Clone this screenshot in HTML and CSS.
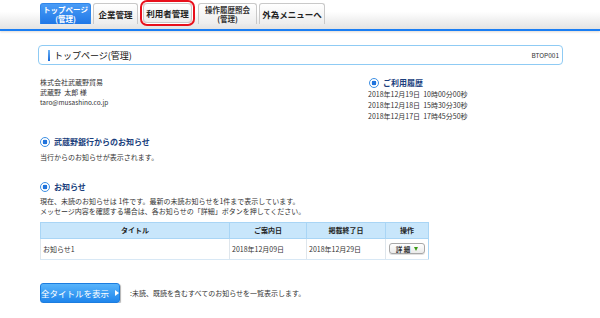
FILE: index.html
```html
<!DOCTYPE html>
<html lang="ja">
<head>
<meta charset="utf-8">
<title>トップページ(管理)</title>
<link rel="stylesheet" href="styles.css">
</head>
<body>
<header class="gnav">
  <ul class="tabs">
    <li class="tab tab-active">トップページ<br>(管理)</li>
    <li class="tab tab-w45">企業管理</li>
    <li class="tab tab-marked">利用者管理</li>
    <li class="tab tab-2line">操作履歴照会<br>(管理)</li>
    <li class="tab tab-w66">外為メニューへ</li>
  </ul>
</header>
<main class="content">
  <div class="page-title">
    <h1>トップページ(管理)</h1>
    <span class="screen-id">BTOP001</span>
  </div>

  <div class="top-info">
    <div class="user">
      <p>株式会社武蔵野貿易</p>
      <p>武蔵野&nbsp;&nbsp;太郎&nbsp;様</p>
      <p class="mail">taro@musashino.co.jp</p>
    </div>
    <div class="history">
      <h2 class="sec-head">ご利用履歴</h2>
      <p>2018年12月19日&nbsp;&nbsp;10時00分00秒</p>
      <p>2018年12月18日&nbsp;&nbsp;15時30分30秒</p>
      <p>2018年12月17日&nbsp;&nbsp;17時45分50秒</p>
    </div>
  </div>

  <section class="sec sec-bank">
    <h2 class="sec-head">武蔵野銀行からのお知らせ</h2>
    <p>当行からのお知らせが表示されます。</p>
  </section>

  <section class="sec sec-news">
    <h2 class="sec-head">お知らせ</h2>
    <p>現在、未読のお知らせは 1件です。最新の未読お知らせを1件まで表示しています。</p>
    <p>メッセージ内容を確認する場合は、各お知らせの「詳細」ボタンを押してください。</p>
    <table class="news-table">
      <colgroup>
        <col class="c-title"><col class="c-date"><col class="c-end"><col class="c-op">
      </colgroup>
      <thead>
        <tr><th>タイトル</th><th>ご案内日</th><th>掲載終了日</th><th>操作</th></tr>
      </thead>
      <tbody>
        <tr>
          <td>お知らせ1</td>
          <td>2018年12月09日</td>
          <td>2018年12月29日</td>
          <td class="op"><span class="detail-btn">詳&nbsp;細<i class="tri-down"></i></span></td>
        </tr>
      </tbody>
    </table>
  </section>

  <div class="all-row">
    <span class="all-btn">全タイトルを表示<i class="tri-right"></i></span>
    <span class="all-note">:未読、既読を含むすべてのお知らせを一覧表示します。</span>
  </div>
</main>
</body>
</html>
```

FILE: styles.css
```css
* { box-sizing: border-box; }
body {
  margin: 0;
  background: #fff;
  color: #333;
  font-family: "Noto Sans CJK JP", "Noto Sans", sans-serif;
  font-size: 7px;
}
p, h1, h2 { margin: 0; }

/* global nav */
.gnav {
  height: 31px;
  background: linear-gradient(#fff 0%, #fff 40%, #e3e3e3 100%);
  border-bottom: 2px solid #1a7ef4;
  box-shadow: 0 1px 2px rgba(170, 150, 130, 0.35);
}
.tabs {
  list-style: none;
  margin: 0;
  padding: 3px 0 0 40px;
  display: flex;
  gap: 2px;
}
.tab {
  height: 21px;
  width: 49px;
  border: 1px solid #c9c9c9;
  border-bottom: none;
  border-radius: 3px 3px 0 0;
  background: linear-gradient(#ffffff, #ededed);
  display: flex;
  align-items: center;
  justify-content: center;
  text-align: center;
  font-size: 8.5px;
  font-weight: bold;
  color: #222;
  line-height: 10px;
  white-space: nowrap;
}
.tab-active {
  width: 51px;
  border-color: #2f86ea;
  background: linear-gradient(#4a9cf6, #1f77e6);
  color: #fff;
  font-size: 7.5px;
  line-height: 9.5px;
}
.tab-w45 { width: 45px; }
.tab-marked {
  margin: 0 4px 0 3px;
  box-shadow: 0 0 0 1px #fff, 0 0 0 3px #e8101c;
  border-radius: 4px;
  border-bottom: 1px solid #c9c9c9;
  height: 20px;
}
.tab-2line {
  width: 59px;
  font-size: 7.5px;
  line-height: 9.5px;
  color: #333;
}
.tab-w66 { width: 66px; }

/* content */
.content { padding: 0 37px 0 38px; }

.page-title {
  margin-top: 14px;
  height: 20px;
  border: 1px solid #8fcbf4;
  border-radius: 4px;
  display: flex;
  align-items: center;
  justify-content: space-between;
  padding: 0 3px 0 9px;
}
.page-title h1 {
  font-size: 9px;
  font-weight: normal;
  color: #111;
  display: flex;
  align-items: center;
  gap: 4px;
}
.page-title h1::before {
  content: "";
  width: 2px;
  height: 11px;
  background: linear-gradient(#6fb5f7, #1668d8);
}
.screen-id { font-size: 6.5px; color: #333; }

.top-info {
  margin-top: 12px;
  display: grid;
  grid-template-columns: 328px 1fr;
  padding-left: 2px;
}
.user p { line-height: 10px; }
.user .mail { font-size: 6.5px; }
.history p { line-height: 11px; }
.history .sec-head { margin-left: 1px; }

.sec-head {
  font-size: 8px;
  font-weight: bold;
  color: #1b3f7d;
  line-height: 12px;
  display: flex;
  align-items: center;
  gap: 4px;
}
.sec-head::before {
  content: "";
  width: 8px;
  height: 8px;
  border-radius: 50%;
  border: 1px solid #3d8fe3;
  background: radial-gradient(circle, #1f73dc 0 2.2px, #fff 2.6px);
}

.sec { padding-left: 2px; }
.sec p { line-height: 10.5px; }
.sec-bank { margin-top: 14px; }
.sec-bank .sec-head { margin-bottom: 4px; }
.sec-news { margin-top: 18px; }
.sec-news .sec-head { margin-bottom: 3px; }

.news-table {
  margin-top: 5px;
  width: 388px;
  border-collapse: collapse;
  border: 1px solid #a9d5f5;
  table-layout: fixed;
}
.c-title { width: 189px; }
.c-date { width: 77px; }
.c-end { width: 79px; }
.c-op { width: 43px; }
.news-table th {
  height: 16px;
  background: #c8e6fb;
  border: 1px solid #a9d5f5;
  font-size: 7px;
  font-weight: bold;
  color: #222;
  text-align: center;
  padding: 0;
}
.news-table td {
  height: 21px;
  border-left: 1px solid #dfe6ec;
  border-bottom: 1px solid #d8e8f5;
  padding: 0 2px;
  font-size: 7px;
  color: #333;
  white-space: nowrap;
}
.news-table td.op { text-align: center; padding: 0; }
.detail-btn {
  display: inline-flex;
  align-items: center;
  justify-content: center;
  gap: 4px;
  width: 36px;
  height: 11px;
  border: 1px solid #a8a8a8;
  border-radius: 3px;
  background: linear-gradient(#fff, #eaeaea);
  box-shadow: 0 1px 0 rgba(0,0,0,0.12);
  font-size: 6.5px;
  font-weight: bold;
  color: #333;
}
.tri-down {
  width: 0; height: 0;
  border-left: 2.5px solid transparent;
  border-right: 2.5px solid transparent;
  border-top: 4px solid #3a9a16;
}

.all-row {
  margin-top: 23px;
  padding-left: 2px;
  display: flex;
  align-items: center;
  gap: 10px;
}
.all-btn {
  width: 80px;
  height: 20px;
  border: 1px solid #1c7ddf;
  border-radius: 3px;
  background: linear-gradient(#58b4fb, #1f86ec);
  box-shadow: 1px 1px 1px rgba(0,0,0,0.3);
  color: #fff;
  font-size: 8.5px;
  display: flex;
  align-items: center;
  justify-content: center;
  gap: 6px;
}
.tri-right {
  width: 0; height: 0;
  border-top: 3px solid transparent;
  border-bottom: 3px solid transparent;
  border-left: 4px solid #fff;
}
.all-note { font-size: 7px; color: #333; }
```
